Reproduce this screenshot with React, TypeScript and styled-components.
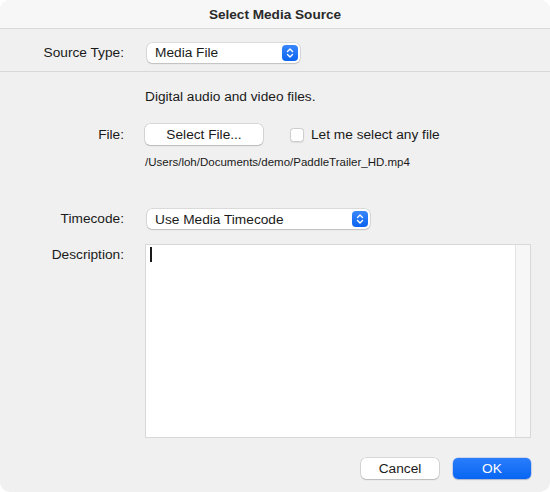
import { createGlobalStyle } from 'styled-components'
import styled from 'styled-components'

const GlobalStyle = createGlobalStyle`
  html, body {
    margin: 0;
    padding: 0;
    background: #ffffff;
  }
  body {
    font-family: 'Liberation Sans', Arial, sans-serif;
    -webkit-font-smoothing: antialiased;
  }
`

const Stepper = () => (
  <StepperBox>
    <svg width="8" height="12" viewBox="0 0 8 12" fill="none">
      <path d="M1.5 4.5 L4 2 L6.5 4.5" stroke="#fff" strokeWidth="1.4" strokeLinecap="round" strokeLinejoin="round" />
      <path d="M1.5 7.5 L4 10 L6.5 7.5" stroke="#fff" strokeWidth="1.4" strokeLinecap="round" strokeLinejoin="round" />
    </svg>
  </StepperBox>
)

const App = () => {
  return (
    <>
      <GlobalStyle />
      <Window>
        <TitleBar>Select Media Source</TitleBar>
        <Header>
          <FormRow>
            <Label>Source Type:</Label>
            <PopUp $width={153}>
              <span>Media File</span>
              <Stepper />
            </PopUp>
          </FormRow>
        </Header>
        <Body>
          <FormRow $top={17}>
            <span />
            <Text>Digital audio and video files.</Text>
          </FormRow>
          <FormRow $top={19}>
            <Label>File:</Label>
            <Inline>
              <PushButton $width={118}>Select File...</PushButton>
              <CheckLabel>
                <CheckBox />
                Let me select any file
              </CheckLabel>
            </Inline>
          </FormRow>
          <FormRow $top={10}>
            <span />
            <PathText>/Users/loh/Documents/demo/PaddleTrailer_HD.mp4</PathText>
          </FormRow>
          <FormRow $top={40}>
            <Label>Timecode:</Label>
            <PopUp $width={223}>
              <span>Use Media Timecode</span>
              <Stepper />
            </PopUp>
          </FormRow>
          <FormRow $top={15} $alignTop>
            <Label $pad={3}>Description:</Label>
            <TextArea>
              <Caret />
              <ScrollTrack />
            </TextArea>
          </FormRow>
          <Footer>
            <PushButton $width={78}>Cancel</PushButton>
            <DefaultButton>OK</DefaultButton>
          </Footer>
        </Body>
      </Window>
    </>
  )
}

export default App

const Window = styled.div`
  width: 550px;
  height: 492px;
  border-radius: 10px;
  background: #f0f0f0;
  overflow: hidden;
  display: flex;
  flex-direction: column;
  color: #1a1a1a;
  font-size: 13.7px;
`

const TitleBar = styled.div`
  height: 28px;
  flex: none;
  display: flex;
  align-items: center;
  justify-content: center;
  background: #f7f7f7;
  border-bottom: 1px solid #dadada;
  font-weight: bold;
  font-size: 13.6px;
  color: #2a2a2a;
`

const Header = styled.div`
  height: 43px;
  box-sizing: border-box;
  padding-top: 5px;
  flex: none;
  display: flex;
  align-items: center;
  border-bottom: 1px solid #d9d9d9;
`

const Body = styled.div`
  flex: 1;
  display: flex;
  flex-direction: column;
  padding-right: 19px;
`

const FormRow = styled.div<{ $top?: number; $alignTop?: boolean }>`
  width: 100%;
  display: grid;
  grid-template-columns: 124px 1fr;
  column-gap: 21px;
  align-items: ${({ $alignTop }) => ($alignTop ? 'start' : 'center')};
  margin-top: ${({ $top }) => $top ?? 0}px;
`

const Label = styled.div<{ $pad?: number }>`
  text-align: right;
  line-height: 16px;
  padding-top: ${({ $pad }) => $pad ?? 0}px;
`

const Text = styled.div`
  line-height: 16px;
`

const PathText = styled.div`
  font-size: 11.5px;
  line-height: 14px;
`

const PopUp = styled.div<{ $width: number }>`
  margin-left: 2px;
  width: ${({ $width }) => $width}px;
  height: 20px;
  box-sizing: border-box;
  display: flex;
  align-items: center;
  justify-content: space-between;
  padding: 0 2px 0 8px;
  background: #ffffff;
  border-radius: 5px;
  box-shadow: 0 0 0 0.5px rgba(0, 0, 0, 0.18), 0 1px 1.5px rgba(0, 0, 0, 0.12);
`

const StepperBox = styled.div`
  width: 16px;
  height: 16px;
  border-radius: 4px;
  background: linear-gradient(#3a87fb, #0a64f0);
  display: flex;
  align-items: center;
  justify-content: center;
`

const Inline = styled.div`
  display: flex;
  align-items: center;
  gap: 27px;
`

const PushButton = styled.div<{ $width: number }>`
  width: ${({ $width }) => $width}px;
  height: 21px;
  box-sizing: border-box;
  display: flex;
  align-items: center;
  justify-content: center;
  background: #ffffff;
  border-radius: 5px;
  box-shadow: 0 0 0 0.5px rgba(0, 0, 0, 0.2), 0 1px 1.5px rgba(0, 0, 0, 0.14);
`

const DefaultButton = styled.div`
  width: 78px;
  height: 21px;
  display: flex;
  align-items: center;
  justify-content: center;
  border-radius: 5px;
  color: #ffffff;
  background: linear-gradient(#2a7dfb, #0866f3);
  box-shadow: 0 0 0 0.5px rgba(0, 60, 200, 0.3), 0 1px 1.5px rgba(0, 0, 0, 0.15);
`

const CheckLabel = styled.div`
  display: flex;
  align-items: center;
  gap: 7px;
`

const CheckBox = styled.div`
  width: 14px;
  height: 14px;
  box-sizing: border-box;
  border-radius: 3.5px;
  background: #ffffff;
  border: 1px solid #cdcdcd;
  box-shadow: 0 0.5px 1px rgba(0, 0, 0, 0.08);
`

const TextArea = styled.div`
  height: 194px;
  box-sizing: border-box;
  background: #ffffff;
  border: 1px solid #d8d8d8;
  display: flex;
  justify-content: space-between;
`

const Caret = styled.div`
  width: 2px;
  height: 15px;
  margin: 2px 0 0 4px;
  background: #1a1a1a;
`

const ScrollTrack = styled.div`
  width: 14px;
  background: #f7f7f7;
  border-left: 1px solid #e4e4e4;
`

const Footer = styled.div`
  display: flex;
  justify-content: flex-end;
  gap: 14px;
  margin-top: 20px;
`
